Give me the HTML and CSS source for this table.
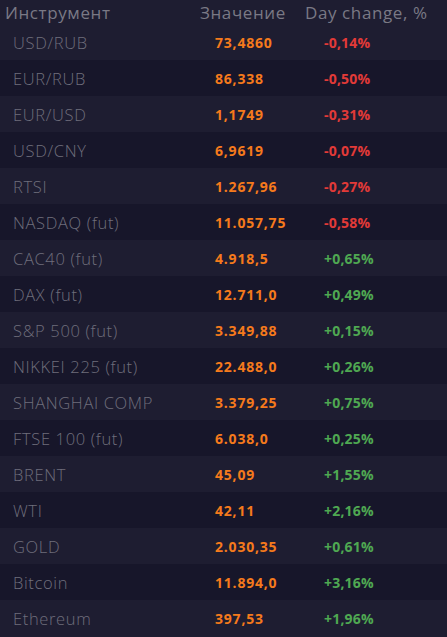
FILE: index.html
```html
<!DOCTYPE html>
<html>
<head>
<meta charset="utf-8">
<link rel="stylesheet" href="styles.css">
</head>
<body>
<div class="table">
  <div class="head">
    <span class="c1">Инструмент</span>
    <span class="c2">Значение</span>
    <span class="c3">Day change, %</span>
  </div>
  <div class="row"><span class="name">USD/RUB</span><span class="val">73,4860</span><span class="chg neg">-0,14%</span></div>
  <div class="row"><span class="name">EUR/RUB</span><span class="val">86,338</span><span class="chg neg">-0,50%</span></div>
  <div class="row"><span class="name">EUR/USD</span><span class="val">1,1749</span><span class="chg neg">-0,31%</span></div>
  <div class="row"><span class="name">USD/CNY</span><span class="val">6,9619</span><span class="chg neg">-0,07%</span></div>
  <div class="row"><span class="name">RTSI</span><span class="val">1.267,96</span><span class="chg neg">-0,27%</span></div>
  <div class="row"><span class="name">NASDAQ (fut)</span><span class="val">11.057,75</span><span class="chg neg">-0,58%</span></div>
  <div class="row"><span class="name">CAC40 (fut)</span><span class="val">4.918,5</span><span class="chg pos">+0,65%</span></div>
  <div class="row"><span class="name">DAX (fut)</span><span class="val">12.711,0</span><span class="chg pos">+0,49%</span></div>
  <div class="row"><span class="name">S&amp;P 500 (fut)</span><span class="val">3.349,88</span><span class="chg pos">+0,15%</span></div>
  <div class="row"><span class="name">NIKKEI 225 (fut)</span><span class="val">22.488,0</span><span class="chg pos">+0,26%</span></div>
  <div class="row"><span class="name">SHANGHAI COMP</span><span class="val">3.379,25</span><span class="chg pos">+0,75%</span></div>
  <div class="row"><span class="name">FTSE 100 (fut)</span><span class="val">6.038,0</span><span class="chg pos">+0,25%</span></div>
  <div class="row"><span class="name">BRENT</span><span class="val">45,09</span><span class="chg pos">+1,55%</span></div>
  <div class="row"><span class="name">WTI</span><span class="val">42,11</span><span class="chg pos">+2,16%</span></div>
  <div class="row"><span class="name">GOLD</span><span class="val">2.030,35</span><span class="chg pos">+0,61%</span></div>
  <div class="row"><span class="name">Bitcoin</span><span class="val">11.894,0</span><span class="chg pos">+3,16%</span></div>
  <div class="row"><span class="name">Ethereum</span><span class="val">397,53</span><span class="chg pos">+1,96%</span></div>
</div>
</body>
</html>
```
FILE: styles.css
```css
html, body {
  margin: 0;
  padding: 0;
  background: #1e1d31;
}
.table {
  width: 447px;
  display: flex;
  flex-direction: column;
}
.head {
  height: 24px;
  display: grid;
  grid-template-columns: 195px 105px 1fr;
  align-items: center;
  padding-left: 5px;
  background: #1e1d31;
  font-family: "Open Sans", sans-serif;
  font-size: 17px;
  letter-spacing: 0.6px;
  color: #7a7985;
}
.row {
  height: 36px;
  display: grid;
  grid-template-columns: 202px 109px 1fr;
  align-items: center;
  padding-left: 13px;
  background: #1e1d31;
}
.row:nth-child(odd) {
  background: #17162a;
}
.name {
  font-family: "Open Sans", sans-serif;
  font-weight: 300;
  font-size: 16.5px;
  letter-spacing: 0.65px;
  color: #6f6e7c;
}
.val {
  font-family: "Open Sans", sans-serif;
  font-weight: 700;
  font-size: 14px;
  letter-spacing: 0.8px;
  color: #f57a1c;
  padding-top: 1px;
}
.chg {
  font-family: "Open Sans", sans-serif;
  font-weight: 700;
  font-size: 14px;
  letter-spacing: 0.2px;
  padding-top: 1px;
}
.neg { color: #e23a38; }
.pos { color: #4fa852; }
```
